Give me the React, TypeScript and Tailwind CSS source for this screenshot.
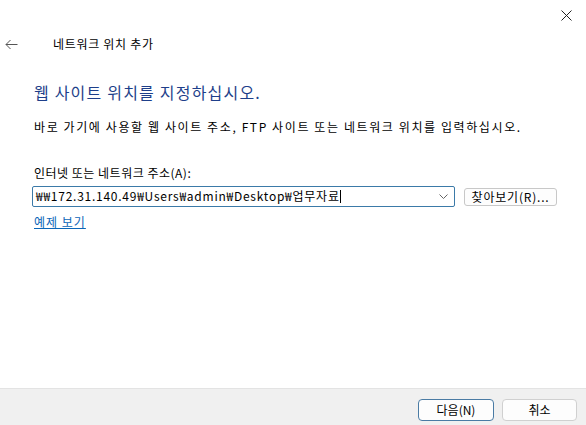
export default function App() {
  return (
    <div
      className="w-[586px] h-[425px] bg-white flex flex-col text-black overflow-hidden"
      style={{ fontFamily: '"Noto Sans CJK KR", "Noto Sans", sans-serif' }}
    >
      {/* Title bar */}
      <div className="h-[30px] flex justify-end items-start">
        <button className="w-[40px] h-[30px] flex items-center justify-center text-[#222]">
          <svg width="11" height="11" viewBox="0 0 11 11" fill="none" stroke="currentColor" strokeWidth="1">
            <path d="M0.5 0.5 L10.5 10.5 M10.5 0.5 L0.5 10.5" />
          </svg>
        </button>
      </div>

      {/* Header */}
      <div className="flex items-center h-[28px] pl-[4px]">
        <div className="w-[14px] h-[14px] flex items-center justify-center text-[#555]">
          <svg width="13" height="11" viewBox="0 0 13 11" fill="none" stroke="currentColor" strokeWidth="1">
            <path d="M12.5 5.5 H1 M5.5 1 L1 5.5 L5.5 10" />
          </svg>
        </div>
        <span className="ml-[35px] text-[12px] leading-none tracking-[0.7px]">네트워크 위치 추가</span>
      </div>

      {/* Body */}
      <div className="flex-1 pl-[34px] pr-[20px]">
        <h1 className="mt-[24px] text-[16px] leading-[20px] tracking-[1.2px] text-[#1e3f8a]">웹 사이트 위치를 지정하십시오.</h1>
        <p className="mt-[17px] text-[12px] leading-[16px] tracking-[1.6px] whitespace-nowrap">
          바로 가기에 사용할 웹 사이트 주소, FTP 사이트 또는 네트워크 위치를 입력하십시오.
        </p>
        <p className="mt-[30px] text-[12px] leading-[16px] tracking-[0.5px]">인터넷 또는 네트워크 주소(A):</p>
        <div className="mt-[5px] flex items-center -ml-[2px]">
          <div className="w-[423px] h-[21px] border border-[#3b7aa8] rounded-[2px] flex items-center pl-[3px] pr-[6px]">
            <span className="flex-1 text-[12px] leading-none tracking-[0.75px] whitespace-nowrap">
              ₩₩172.31.140.49₩Users₩admin₩Desktop₩업무자료<span className="inline-block w-px h-[13px] bg-black align-middle -mt-[2px]" />
            </span>
            <svg width="9" height="6" viewBox="0 0 9 6" fill="none" stroke="#666" strokeWidth="1">
              <path d="M0.5 0.5 L4.5 4.5 L8.5 0.5" />
            </svg>
          </div>
          <button className="ml-[9px] w-[93px] h-[18px] border border-[#c8c8c8] rounded-[3px] bg-[#fdfdfd] text-[12px] leading-none tracking-[0.8px] flex items-center justify-center">
            찾아보기(R)...
          </button>
        </div>
        <a href="#" className="mt-[7px] inline-block text-[12px] leading-[16px] tracking-[1px] text-[#0b66b8] underline">
          예제 보기
        </a>
      </div>

      {/* Footer */}
      <div className="h-[37px] bg-[#f0f0f0] border-t border-[#e3e3e3] flex items-start justify-end gap-[8px] pr-[9px] pt-[10px]">
        <button className="w-[76px] h-[22px] border border-[#4a7ba4] rounded-[4px] bg-[#fdfdfd] text-[12px] leading-none">
          다음(N)
        </button>
        <button className="w-[75px] h-[22px] border border-[#d0d0d0] rounded-[4px] bg-[#fdfdfd] text-[12px] leading-none">
          취소
        </button>
      </div>
    </div>
  );
}
